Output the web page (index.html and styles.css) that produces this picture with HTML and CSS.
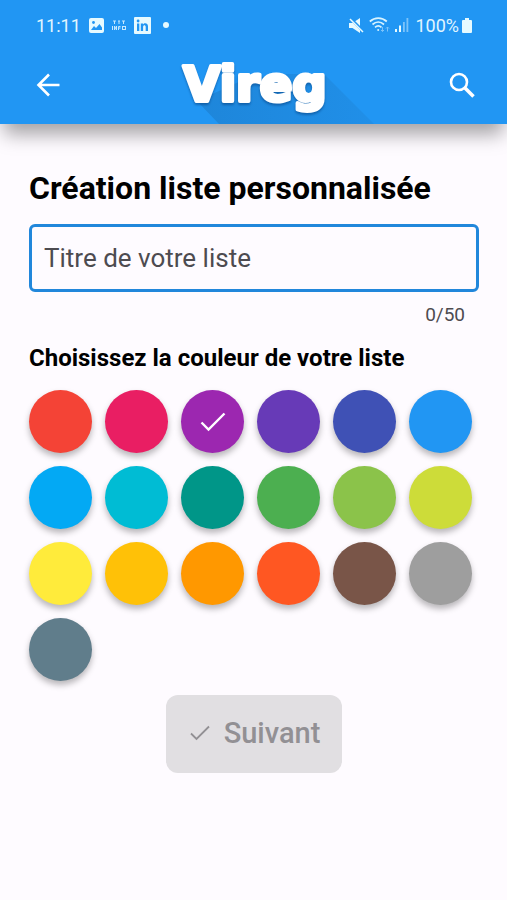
FILE: index.html
```html
<!DOCTYPE html>
<html lang="fr">
<head>
<meta charset="utf-8">
<meta name="viewport" content="width=device-width, initial-scale=1">
<title>Vireg</title>
<link rel="stylesheet" href="styles.css">
</head>
<body>
<header class="header">
  <div class="status">
    <div class="status-group">
      <span class="clock">11:11</span>
      <svg width="15" height="15" viewBox="0 0 15 15"><rect width="15" height="15" rx="2" fill="#e6faff"/><path d="M2 12l3-4 2 2 3.500-4L13 9.500V12z" fill="#2196f3"/><circle cx="4.500" cy="4.500" r="1.400" fill="#2196f3"/></svg>
      <svg width="14" height="12" viewBox="0 0 14 12" fill="none" stroke="#c5e8ff"><path d="M1 2h3M2.500 2v3M6 2h2M7 2v3M10 2h3M11.500 2v3M.5 7v4M2.500 11V7l2 4V7M6.500 11V7.500h2M6.500 9h2"/><rect x="10.500" y="7.500" width="3" height="3"/></svg>
      <svg width="17" height="17" viewBox="0 0 17 17"><rect width="17" height="17" rx="1" fill="#e6faff"/><path d="M3 6.500h2.300V14H3zM6.800 6.500H9v1c1.200-1.900 5-1.700 5 1.800V14h-2.300V9.800c0-2.200-2.600-2-2.600 0V14H6.800z" fill="#2196f3"/><circle cx="4.100" cy="4" r="1.400" fill="#2196f3"/></svg>
      <span class="dot"></span>
    </div>
    <div class="status-group tight">
      <svg width="15" height="15" viewBox="0 0 15 15"><path d="M0 5h3.500L11 0v15L3.500 10H0z" fill="#e6faff"/><path d="M1 0l14 14" stroke="#2196f3" stroke-width="3"/><path d="M1 1l13 13" stroke="#e6faff" stroke-width="1.500"/></svg>
      <svg width="21" height="16" viewBox="0 0 21 16" fill="none" stroke="#d8f3ff" stroke-width="1.700"><path d="M.8 4.500c5-4.600 12-4.600 17 0M3.500 7.500c3.500-3.200 8-3.200 11.500 0M6 10.300c2-1.800 4.500-1.800 6.500 0"/><circle cx="9.200" cy="13" r="1" fill="#d8f3ff" stroke="none"/><path d="M13.500 10v4.500M12 13l1.500 1.500L15 13M18.500 14.500V10M17 11.500l1.500-1.500 1.500 1.500" stroke="#7cc3fa" stroke-width="1"/></svg>
      <svg width="14" height="14" viewBox="0 0 14 14"><path d="M0 11h2v3H0zM4 7.500h2V14H4z" fill="#e6faff"/><path d="M8 4h1.800v10H8zM11.500 0h1.800v14h-1.800z" fill="#7cc3fa"/></svg>
      <span class="battery"><span>100%</span>
      <svg width="10" height="15" viewBox="0 0 10 15" fill="#e6faff"><path d="M3 0h4v2h2q1 0 1 1v11q0 1-1 1H1q-1 0-1-1V3q0-1 1-1h2z"/></svg></span>
    </div>
  </div>
  <nav class="bar">
    <button class="icon-button" type="button" aria-label="Retour">
      <svg width="24" height="24" viewBox="0 0 24 24" fill="none" stroke="#fff" stroke-width="2.600"><path d="M23.500 12H2.500M13 1.500L2.500 12L13 22.500"/></svg>
    </button>
    <svg class="logo" width="144" height="70" viewBox="0 0 144 70" role="img" aria-label="Vireg">
      <defs>
        <linearGradient id="shade" x1="0" y1="0" x2="1" y2="0">
          <stop offset="0" stop-color="#1e86da"/>
          <stop offset="1" stop-color="#208fe8"/>
        </linearGradient>
      </defs>
      <path d="M14 51L36 74H191L141 24L100 24L60 30z" fill="url(#shade)"/>
      <text class="logo-text" x="72" y="51" text-anchor="middle">Vireg</text>
    </svg>
    <button class="icon-button" type="button" aria-label="Rechercher">
      <svg width="26" height="26" viewBox="0 0 26 26" fill="none" stroke="#fff"><circle cx="10" cy="10" r="8" stroke-width="2.600"/><path d="M15.500 15.500L24.500 24.500" stroke-width="3.500"/></svg>
    </button>
  </nav>
</header>
<main class="content">
  <h1 class="title">Création liste personnalisée</h1>
  <input class="field" type="text" maxlength="50" placeholder="Titre de votre liste" aria-label="Titre de votre liste">
  <div class="counter">0/50</div>
  <fieldset class="picker">
    <legend class="subtitle">Choisissez la couleur de votre liste</legend>
    <div class="swatches">
      <label class="swatch red"><input type="radio" name="color" aria-label="Rouge"></label>
      <label class="swatch pink"><input type="radio" name="color" aria-label="Rose"></label>
      <label class="swatch purple"><input type="radio" name="color" aria-label="Violet" checked><svg width="26" height="20" viewBox="0 0 26 20" fill="none" stroke="#fff" stroke-width="2.400"><path d="M1.500 10.500L8.500 17.500L24.500 1.500"/></svg></label>
      <label class="swatch deep-purple"><input type="radio" name="color" aria-label="Violet foncé"></label>
      <label class="swatch indigo"><input type="radio" name="color" aria-label="Indigo"></label>
      <label class="swatch blue"><input type="radio" name="color" aria-label="Bleu"></label>
      <label class="swatch light-blue"><input type="radio" name="color" aria-label="Bleu clair"></label>
      <label class="swatch cyan"><input type="radio" name="color" aria-label="Cyan"></label>
      <label class="swatch teal"><input type="radio" name="color" aria-label="Sarcelle"></label>
      <label class="swatch green"><input type="radio" name="color" aria-label="Vert"></label>
      <label class="swatch light-green"><input type="radio" name="color" aria-label="Vert clair"></label>
      <label class="swatch lime"><input type="radio" name="color" aria-label="Citron vert"></label>
      <label class="swatch yellow"><input type="radio" name="color" aria-label="Jaune"></label>
      <label class="swatch amber"><input type="radio" name="color" aria-label="Ambre"></label>
      <label class="swatch orange"><input type="radio" name="color" aria-label="Orange"></label>
      <label class="swatch deep-orange"><input type="radio" name="color" aria-label="Orange foncé"></label>
      <label class="swatch brown"><input type="radio" name="color" aria-label="Marron"></label>
      <label class="swatch grey"><input type="radio" name="color" aria-label="Gris"></label>
      <label class="swatch blue-grey"><input type="radio" name="color" aria-label="Gris bleu"></label>
    </div>
  </fieldset>
  <button class="next" type="button" disabled>
    <svg width="20" height="16" viewBox="0 0 20 16" fill="none" stroke="#929094" stroke-width="1.800"><path d="M1 8.500L6.500 14L19 1.500"/></svg>
    <span>Suivant</span>
  </button>
</main>
</body>
</html>
```
FILE: styles.css
```css
* {
  box-sizing: border-box;
}

body {
  margin: 0;
  min-height: 100vh;
  background: #fefbff;
  color: #000;
  font-family: Roboto, "Liberation Sans", sans-serif;
}

svg {
  display: block;
  flex: none;
}

.header {
  background: #2196f3;
  box-shadow: 0 14px 18px -4px rgba(0, 0, 0, 0.36);
}

.status {
  display: flex;
  justify-content: space-between;
  height: 50px;
  padding: 0 35px 0 36px;
  color: #e0f5ff;
  font-size: 18px;
}

.status-group {
  display: flex;
  align-items: center;
  gap: 8px;
}

.tight {
  gap: 5px;
}

.battery {
  display: flex;
  align-items: center;
  gap: 3px;
  padding-left: 1px;
}

.dot {
  width: 6px;
  height: 6px;
  margin-left: 4px;
  border-radius: 50%;
  background: #e6faff;
}

.bar {
  display: flex;
  align-items: center;
  justify-content: space-between;
  height: 74px;
  padding: 0 29px 4px 32px;
}

.icon-button {
  display: grid;
  place-items: center;
  width: 32px;
  height: 44px;
  padding: 0;
  border: 0;
  background: none;
}

.logo {
  overflow: visible;
}

.logo-text {
  fill: #fff;
  stroke: #fff;
  stroke-width: 4px;
  stroke-linejoin: round;
  font-family: "DejaVu Sans", sans-serif;
  font-size: 48px;
  font-weight: 700;
  filter: drop-shadow(0 2px 1px rgba(0, 50, 110, 0.45));
}

.content {
  display: flex;
  flex-direction: column;
  padding: 46px 28px 40px 29px;
}

.title {
  margin: 0 0 18px;
  font-size: 32px;
  font-weight: 700;
  line-height: 36px;
}

.field {
  width: 100%;
  height: 68px;
  padding: 0 12px;
  border: 3px solid #2187db;
  border-radius: 6px;
  outline: 0;
  background: transparent;
  color: #000;
  font: 26px Roboto, "Liberation Sans", sans-serif;
}

.field::placeholder {
  color: #4d4b50;
  opacity: 1;
}

.counter {
  padding: 11px 14px 0;
  color: #4d4b50;
  font-size: 19px;
  line-height: 24px;
  text-align: right;
}

.picker {
  min-width: 0;
  margin: 17px 0 0;
  padding: 0;
  border: 0;
}

.subtitle {
  padding: 0;
  font-size: 24px;
  font-weight: 700;
  line-height: 28px;
}

.swatches {
  display: flex;
  flex-wrap: wrap;
  gap: 13px;
  padding-top: 18px;
}

.swatch {
  display: grid;
  place-items: center;
  width: 63px;
  height: 63px;
  border-radius: 50%;
  box-shadow: 0 4px 6px rgba(0, 0, 0, 0.28);
}

.swatch > * {
  grid-area: 1 / 1;
}

.swatch input {
  width: 100%;
  height: 100%;
  margin: 0;
  border-radius: 50%;
  appearance: none;
}

.red { background: #f44336; }
.pink { background: #e91e63; }
.purple { background: #9c27b0; }
.deep-purple { background: #673ab7; }
.indigo { background: #3f51b5; }
.blue { background: #2196f3; }
.light-blue { background: #03a9f4; }
.cyan { background: #00bcd4; }
.teal { background: #009688; }
.green { background: #4caf50; }
.light-green { background: #8bc34a; }
.lime { background: #cddc39; }
.yellow { background: #ffeb3b; }
.amber { background: #ffc107; }
.orange { background: #ff9800; }
.deep-orange { background: #ff5722; }
.brown { background: #795548; }
.grey { background: #9e9e9e; }
.blue-grey { background: #607d8b; }

.next {
  display: flex;
  align-items: center;
  align-self: center;
  gap: 14px;
  height: 78px;
  margin-top: 14px;
  padding: 0 22px 2px 24px;
  border: 0;
  border-radius: 12px;
  background: #e1dfe2;
  color: #929094;
  font: 500 29px Roboto, "Liberation Sans", sans-serif;
}
```
